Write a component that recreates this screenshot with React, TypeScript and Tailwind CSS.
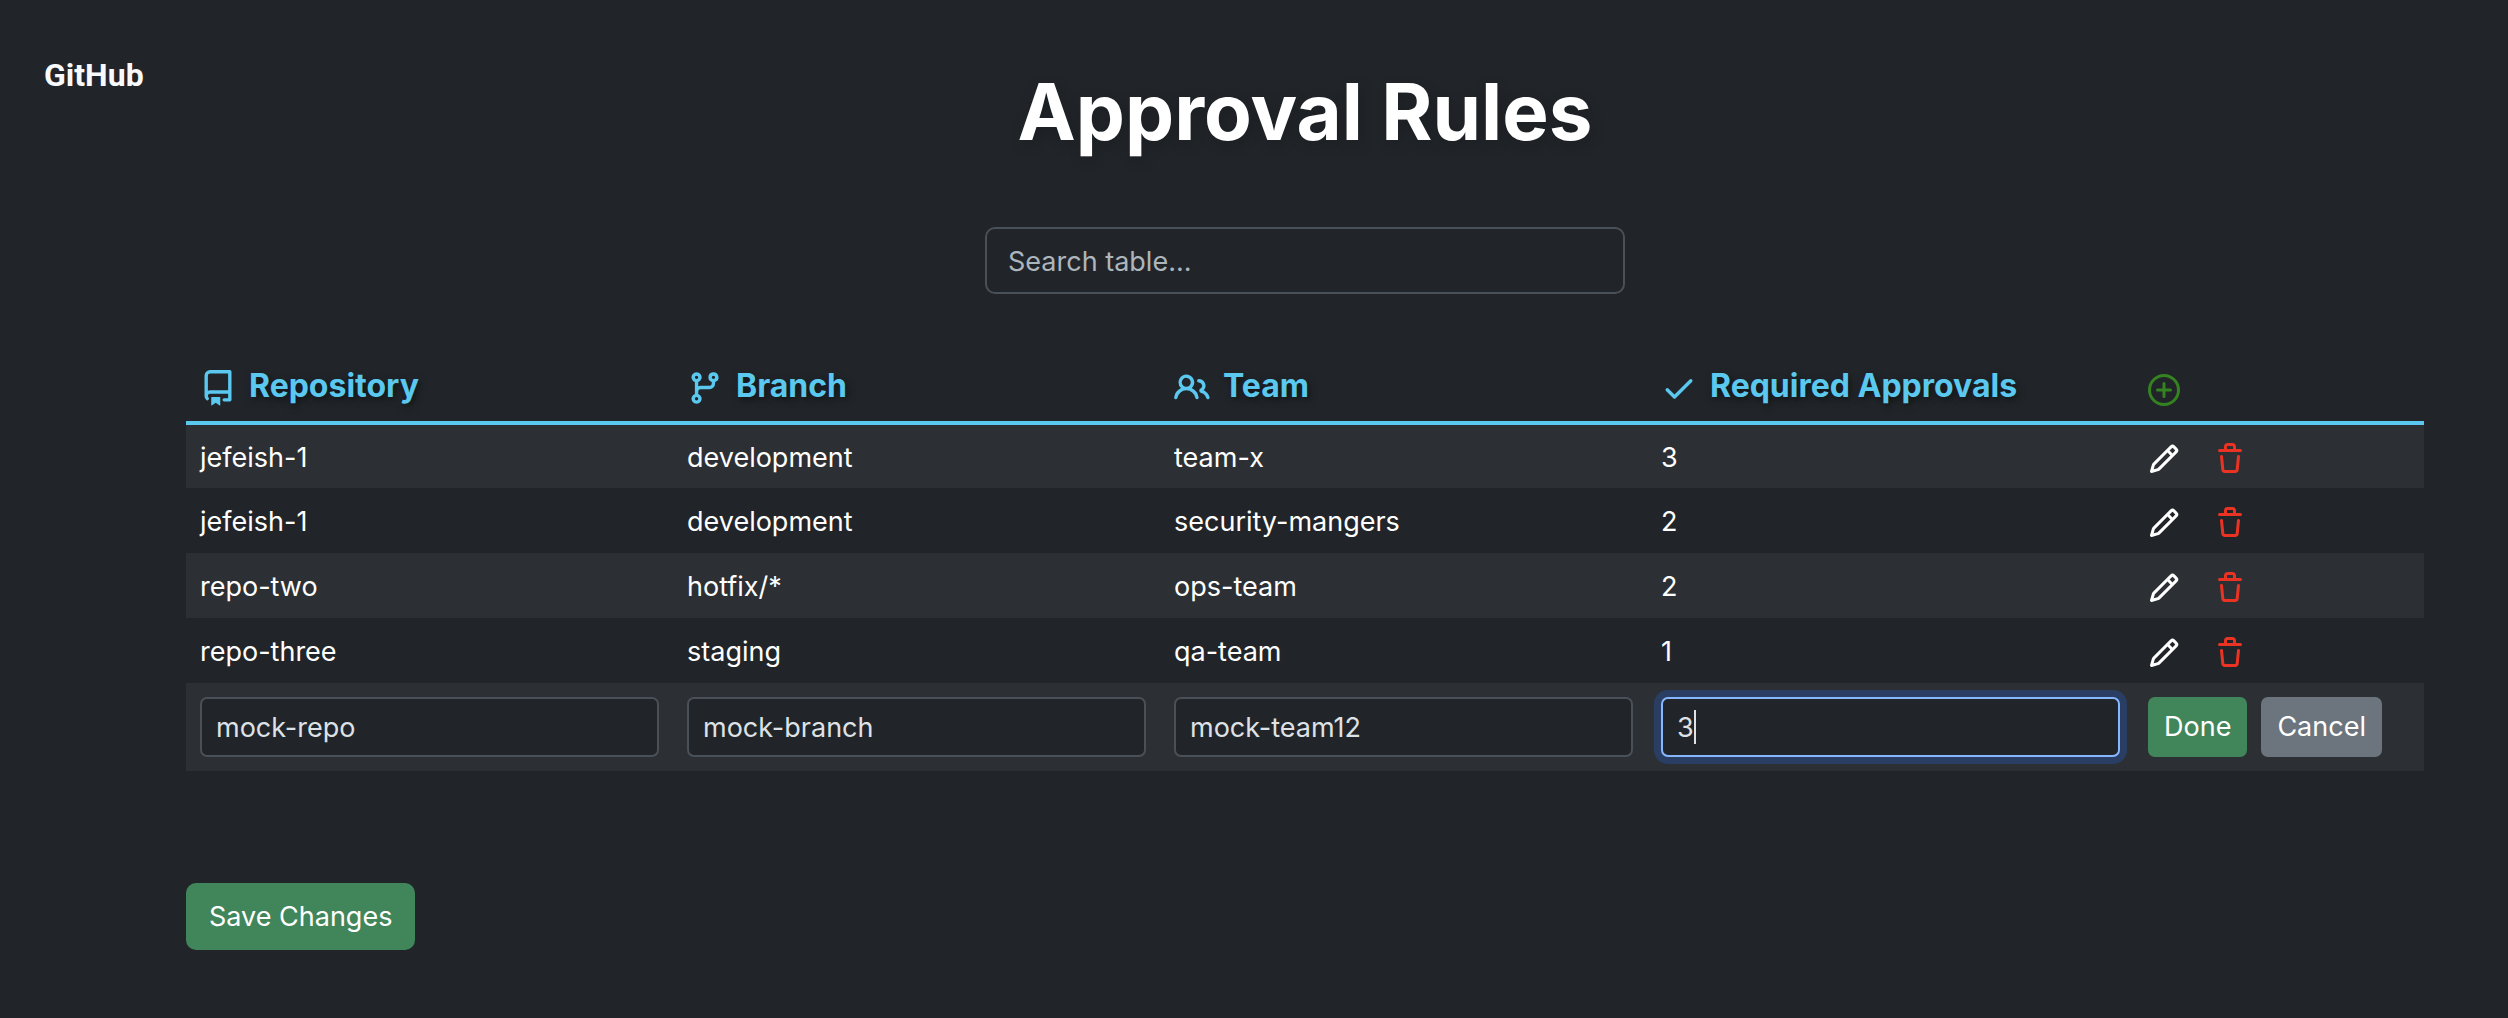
import { useState } from "react";

const icons = {
  repo: "M2 2.5A2.5 2.5 0 0 1 4.5 0h8.75a.75.75 0 0 1 .75.75v12.5a.75.75 0 0 1-.75.75h-2.5a.75.75 0 0 1 0-1.5h1.75v-2h-8a1 1 0 0 0-.714 1.7.75.75 0 1 1-1.072 1.05A2.495 2.495 0 0 1 2 11.5Zm10.5-1h-8a1 1 0 0 0-1 1v6.708A2.486 2.486 0 0 1 4.5 9h8ZM5 12.25a.25.25 0 0 1 .25-.25h3.5a.25.25 0 0 1 .25.25v3.25a.25.25 0 0 1-.4.2l-1.45-1.087a.249.249 0 0 0-.3 0L5.4 15.7a.25.25 0 0 1-.4-.2Z",
  branch: "M9.5 3.25a2.25 2.25 0 1 1 3 2.122V6A2.5 2.5 0 0 1 10 8.5H6a1 1 0 0 0-1 1v1.128a2.251 2.251 0 1 1-1.5 0V5.372a2.25 2.25 0 1 1 1.5 0v1.836A2.493 2.493 0 0 1 6 7h4a1 1 0 0 0 1-1v-.628A2.25 2.25 0 0 1 9.5 3.25Zm-6 0a.75.75 0 1 0 1.5 0 .75.75 0 0 0-1.5 0Zm8.25-.75a.75.75 0 1 0 0 1.5.75.75 0 0 0 0-1.5ZM4.25 12a.75.75 0 1 0 0 1.5.75.75 0 0 0 0-1.5Z",
  people: "M2 5.5a3.5 3.5 0 1 1 5.898 2.549 5.508 5.508 0 0 1 3.034 4.084.75.75 0 1 1-1.482.235 4 4 0 0 0-7.9 0 .75.75 0 0 1-1.482-.236A5.507 5.507 0 0 1 3.102 8.05 3.493 3.493 0 0 1 2 5.5ZM11 4a3.001 3.001 0 0 1 2.22 5.018 5.01 5.01 0 0 1 2.56 3.012.749.749 0 0 1-.885.954.752.752 0 0 1-.549-.514 3.507 3.507 0 0 0-2.522-2.372.75.75 0 0 1-.574-.73v-.352a.75.75 0 0 1 .416-.672A1.5 1.5 0 0 0 11 5.5.75.75 0 0 1 11 4Zm-5.5-.5a2 2 0 1 0-.001 3.999A2 2 0 0 0 5.5 3.5Z",
  check: "M13.78 4.22a.75.75 0 0 1 0 1.06l-7.25 7.25a.75.75 0 0 1-1.06 0L2.22 9.28a.751.751 0 0 1 .018-1.042.751.751 0 0 1 1.042-.018L6 10.94l6.72-6.72a.75.75 0 0 1 1.06 0Z",
  plus: "M8 0a8 8 0 1 1 0 16A8 8 0 0 1 8 0ZM1.5 8a6.5 6.5 0 1 0 13 0 6.5 6.5 0 0 0-13 0Zm7.25-3.25v2.5h2.5a.75.75 0 0 1 0 1.5h-2.5v2.5a.75.75 0 0 1-1.5 0v-2.5h-2.5a.75.75 0 0 1 0-1.5h2.5v-2.5a.75.75 0 0 1 1.5 0Z",
  pencil: "M11.013 1.427a1.75 1.75 0 0 1 2.474 0l1.086 1.086a1.75 1.75 0 0 1 0 2.474l-8.61 8.61c-.21.21-.47.364-.756.445l-3.251.93a.75.75 0 0 1-.927-.928l.929-3.25c.081-.286.235-.547.445-.758l8.61-8.61Zm.176 4.823L9.75 4.81l-6.286 6.287a.253.253 0 0 0-.064.108l-.558 1.953 1.953-.558a.253.253 0 0 0 .108-.064Zm1.238-3.763a.25.25 0 0 0-.354 0L10.811 3.75l1.439 1.44 1.263-1.263a.25.25 0 0 0 0-.354Z",
  trash: "M11 1.75V3h2.25a.75.75 0 0 1 0 1.5H2.75a.75.75 0 0 1 0-1.5H5V1.75C5 .784 5.784 0 6.75 0h2.5C10.216 0 11 .784 11 1.75ZM4.496 6.675l.66 6.6a.25.25 0 0 0 .249.225h5.19a.25.25 0 0 0 .249-.225l.66-6.6a.75.75 0 0 1 1.492.149l-.66 6.6A1.748 1.748 0 0 1 10.595 15h-5.19a1.75 1.75 0 0 1-1.741-1.575l-.66-6.6a.75.75 0 1 1 1.492-.15ZM6.5 1.75V3h3V1.75a.25.25 0 0 0-.25-.25h-2.5a.25.25 0 0 0-.25.25Z",
};

type IconName = keyof typeof icons;

function Icon({ name, className }: { name: IconName; className: string }) {
  return (
    <svg viewBox="0 0 16 16" fill="currentColor" aria-hidden="true" className={className}>
      <path d={icons[name]} />
    </svg>
  );
}

const rules = [
  { repo: "jefeish-1", branch: "development", team: "team-x", approvals: 3 },
  { repo: "jefeish-1", branch: "development", team: "security-mangers", approvals: 2 },
  { repo: "repo-two", branch: "hotfix/*", team: "ops-team", approvals: 2 },
  { repo: "repo-three", branch: "staging", team: "qa-team", approvals: 1 },
];

const columns: { label: string; icon: IconName }[] = [
  { label: "Repository", icon: "repo" },
  { label: "Branch", icon: "branch" },
  { label: "Team", icon: "people" },
  { label: "Required Approvals", icon: "check" },
];

const cell = "px-[14px] pt-[2px]";

const field =
  "block h-[60px] w-full rounded-[7px] border-2 border-[#495057] bg-[#212529] px-[14px] text-[#dee2e6] outline-none";

export default function App() {
  const [draft, setDraft] = useState({ repo: "mock-repo", branch: "mock-branch", team: "mock-team12", approvals: "3" });

  return (
    <div className="flex min-h-screen bg-[#212529] font-['Inter',sans-serif] text-[27px] leading-[42px] text-white">
      <header className="w-[186px] shrink-0 pt-[54px] pl-[44px]">
        <a href="#" className="font-['Roboto',sans-serif] text-[32px] font-bold text-[#f8f9fa]">GitHub</a>
      </header>
      <main className="mr-[84px] min-w-0 grow pt-16">
        <h1 className="text-center text-[78px] leading-[96px] font-bold [text-shadow:2px_4px_14px_rgba(0,0,0,0.2)]">
          Approval Rules
        </h1>
        <input
          type="search"
          aria-label="Search table"
          placeholder="Search table..."
          className="mx-auto mt-[67px] block h-[67px] w-[640px] max-w-full rounded-[10px] border-2 border-[#495057] bg-[#212529] px-[21px] pt-[2px] outline-none placeholder:text-[#adb5bd]"
        />
        <table className="mt-[56px] w-full table-fixed border-collapse text-left">
          <thead>
            <tr className="h-[73px] border-b-4 border-[#5bc8ef] text-[#5bc8ef]">
              {columns.map(({ label, icon }) => (
                <th key={label} scope="col" className="px-[14px]">
                  <span className="flex items-center gap-[13px] text-[32px] font-bold [text-shadow:2px_3px_7px_rgba(0,0,0,0.5)]">
                    <Icon name={icon} className="mt-1 size-9 shrink-0" />
                    {label}
                  </span>
                </th>
              ))}
              <th scope="col" className="w-[290px] px-[14px]">
                <button type="button" aria-label="Add rule" className="mt-2 block text-[#348220]">
                  <Icon name="plus" className="size-8" />
                </button>
              </th>
            </tr>
          </thead>
          <tbody>
            {rules.map((rule, i) => (
              <tr key={i} className="h-[65px] odd:bg-[#2c3034]">
                <td className={cell}>{rule.repo}</td>
                <td className={cell}>{rule.branch}</td>
                <td className={cell}>{rule.team}</td>
                <td className={cell}>{rule.approvals}</td>
                <td className={cell}>
                  <div className="flex items-center gap-[34px] pt-[2px]">
                    <button type="button" aria-label="Edit rule"><Icon name="pencil" className="size-8" /></button>
                    <button type="button" aria-label="Delete rule" className="text-[#ea3323]"><Icon name="trash" className="size-8" /></button>
                  </div>
                </td>
              </tr>
            ))}
            <tr className="bg-[#2c3034]">
              <td className="p-[14px]">
                <input aria-label="Repository" className={field} value={draft.repo} onChange={(e) => setDraft({ ...draft, repo: e.target.value })} />
              </td>
              <td className="p-[14px]">
                <input aria-label="Branch" className={field} value={draft.branch} onChange={(e) => setDraft({ ...draft, branch: e.target.value })} />
              </td>
              <td className="p-[14px]">
                <input aria-label="Team" className={field} value={draft.team} onChange={(e) => setDraft({ ...draft, team: e.target.value })} />
              </td>
              <td className="p-[14px]">
                <div className="relative">
                  <input
                    aria-label="Required approvals"
                    inputMode="numeric"
                    className="block h-[60px] w-full rounded-[7px] border-2 border-[#86b7fe] bg-[#212529] px-[14px] text-[#dee2e6] caret-transparent ring-7 ring-[#2a3e64] outline-none"
                    value={draft.approvals}
                    onChange={(e) => setDraft({ ...draft, approvals: e.target.value })}
                  />
                  <span aria-hidden="true" className="pointer-events-none absolute inset-y-0 left-4 flex items-center">
                    <span className="invisible">{draft.approvals}</span>
                    <span className="h-[34px] w-[2px] bg-[#dee2e6]" />
                  </span>
                </div>
              </td>
              <td className="p-[14px]">
                <div className="flex gap-[14px]">
                  <button type="button" className="h-[60px] rounded-[7px] bg-[#41865a] px-4">Done</button>
                  <button type="button" className="h-[60px] rounded-[7px] bg-[#6c757d] px-4">Cancel</button>
                </div>
              </td>
            </tr>
          </tbody>
        </table>
        <button type="button" className="mt-28 h-[67px] rounded-[10px] bg-[#41865a] px-[23px]">Save Changes</button>
      </main>
    </div>
  );
}
